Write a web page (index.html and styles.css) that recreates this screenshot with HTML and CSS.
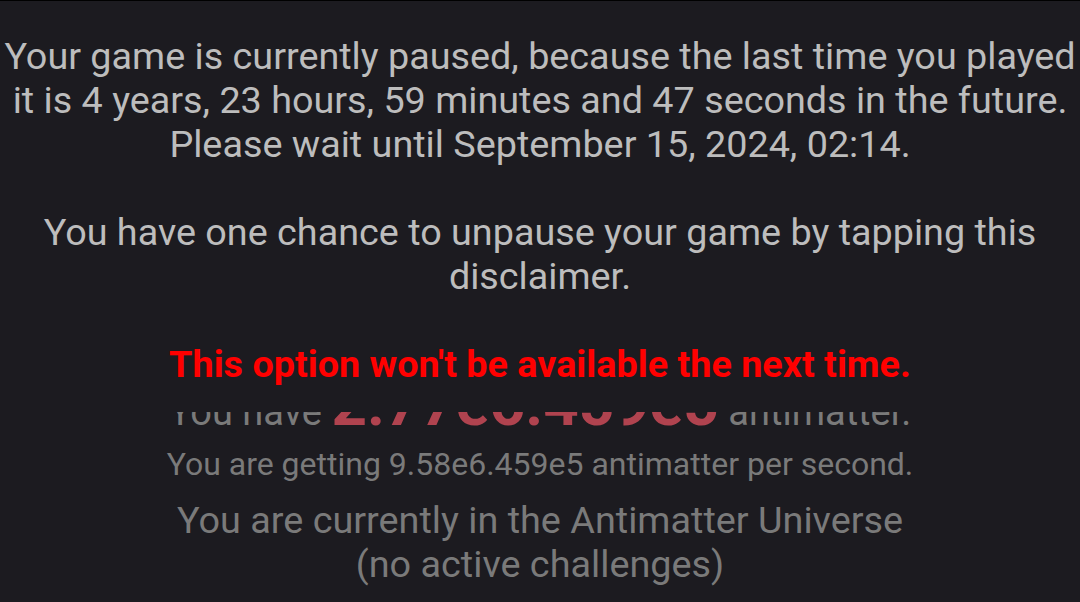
FILE: index.html
```html
<!DOCTYPE html>
<html lang="en">
<head>
<meta charset="utf-8">
<title>Antimatter Dimensions</title>
<link rel="stylesheet" href="styles.css">
</head>
<body>
<div class="game">
  <div class="header">
    <div class="stat stat--amount">You have <span class="amount">2.77e6.459e5</span> antimatter.</div>
    <div class="stat stat--rate">You are getting 9.58e6.459e5 antimatter per second.</div>
    <div class="universe">You are currently in the Antimatter Universe<br>(no active challenges)</div>
  </div>
</div>
<div class="pause-overlay">
  <p class="pause-text">Your game is currently paused, because the last time you played<br>it is 4 years, 23 hours, 59 minutes and 47 seconds in the future.<br>Please wait until September 15, 2024, 02:14.<br><br>You have one chance to unpause your game by tapping this<br>disclaimer.<br><br><span class="warning">This option won't be available the next time.</span></p>
</div>
</body>
</html>
```

FILE: styles.css
```css
html, body {
  margin: 0;
  padding: 0;
  height: 100%;
  background: #1c1b20;
  overflow: hidden;
}

body {
  border-top: 1px solid #000;
  box-sizing: border-box;
  font-family: Roboto, "Liberation Sans", sans-serif;
  position: relative;
}

.game {
  padding-top: 386px;
  text-align: center;
}

.header {
  display: flex;
  flex-direction: column;
  align-items: center;
}

.stat {
  color: #7a7a7a;
  font-size: 32px;
  line-height: 50px;
}

.stat--amount {
  font-size: 38px;
}

.stat--rate {
  margin-top: 2px;
}

.amount {
  color: #b0434f;
  font-weight: 700;
  font-size: 62px;
  line-height: 0;
}

.universe {
  color: #7a7a7a;
  font-size: 37.8px;
  line-height: 44px;
  margin-top: 9px;
}

.pause-overlay {
  position: absolute;
  top: 0;
  left: 0;
  right: 0;
  height: 411px;
  background: #1c1b20;
  padding-top: 33px;
  box-sizing: border-box;
  text-align: center;
}

.pause-text {
  margin: 0;
  color: #bdbdbd;
  font-size: 37.75px;
  line-height: 44px;
}

.warning {
  color: #f00;
  font-weight: 700;
}
```
